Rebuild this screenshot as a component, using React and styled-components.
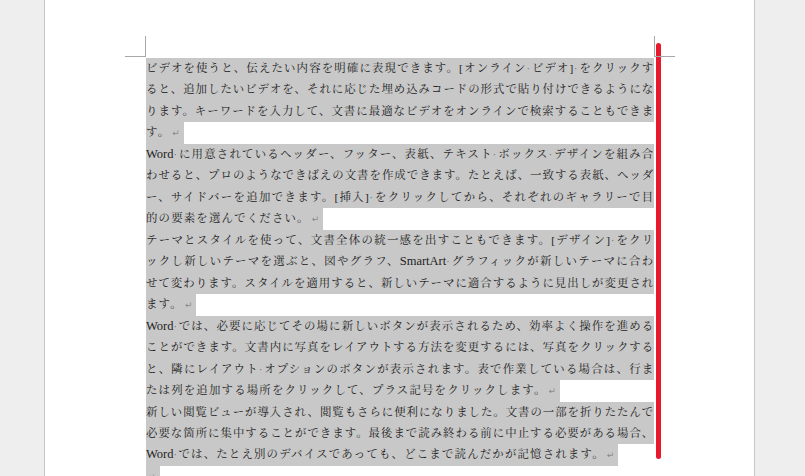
import React from 'react';
import styled, {createGlobalStyle} from 'styled-components';

const GlobalStyle = createGlobalStyle`
html, body {
    margin: 0;
    height: 100%;
    overflow: hidden;
    background: #eeeeee;
}
`;

const Page = styled.main`
    box-sizing: border-box;
    margin-left: 44px;
    width: 711px;
    min-height: 100vh;
    background: #ffffff;
    border-left: 1px solid #c6c6c6;
    border-right: 1px solid #c6c6c6;
    padding: 58px 0 0 101px;
`;

const TextArea = styled.div`
    position: relative;
    width: 508px;
    font-family: "Liberation Serif", "Noto Serif CJK JP", "Noto Sans CJK JP", serif;
    font-size: 11.4px;
    color: #222222;

    &::before, &::after {
        content: "";
        position: absolute;
        top: -22px;
        width: 20px;
        height: 20px;
        border-bottom: 1px solid #a8a8a8;
    }
    &::before {
        left: -21px;
        border-right: 1px solid #a8a8a8;
    }
    &::after {
        left: 508px;
        border-left: 1px solid #a8a8a8;
    }
`;

const RedMark = styled.div`
    position: absolute;
    left: 510px;
    top: -15px;
    width: 5px;
    height: 416px;
    border-radius: 3px;
    background: #e8192c;
`;

const Line = styled.div`
    height: 21.47px;
    line-height: 21.47px;
    background: #c8c8c8;
    letter-spacing: ${p => p.$end ? '1.2px' : '0.8px'};
    width: ${p => p.$end ? 'fit-content' : '100%'};
    padding-right: ${p => p.$end ? '4px' : '0'};
    text-align: ${p => p.$end ? 'left' : 'justify'};
    text-align-last: ${p => p.$end ? 'left' : 'justify'};
    white-space: nowrap;
`;

const Latin = styled.span`
    font-family: "Liberation Serif", serif;
    font-size: 12.5px;
    letter-spacing: 0;
`;

const SpaceMark = styled.span`
    display: inline-block;
    width: 5px;
    color: #666666;
    font-family: "Liberation Serif", serif;
    font-size: 10px;
    letter-spacing: 0;
`;

const ReturnMark = styled.span`
    margin-left: 2px;
    color: #8a8a8a;
    font-family: "DejaVu Sans", sans-serif;
    font-size: 9px;
    letter-spacing: 0;
`;

const paragraphs = [
    [
        'ビデオを使うと、伝えたい内容を明確に表現できます。[オンライン_ビデオ]_をクリックす',
        'ると、追加したいビデオを、それに応じた埋め込みコードの形式で貼り付けできるようにな',
        'ります。キーワードを入力して、文書に最適なビデオをオンラインで検索することもできま',
        'す。',
    ],
    [
        'Word_に用意されているヘッダー、フッター、表紙、テキスト_ボックス_デザインを組み合',
        'わせると、プロのようなできばえの文書を作成できます。たとえば、一致する表紙、ヘッダ',
        'ー、サイドバーを追加できます。[挿入]_をクリックしてから、それぞれのギャラリーで目',
        '的の要素を選んでください。',
    ],
    [
        'テーマとスタイルを使って、文書全体の統一感を出すこともできます。[デザイン]_をクリ',
        'ックし新しいテーマを選ぶと、図やグラフ、SmartArt_グラフィックが新しいテーマに合わ',
        'せて変わります。スタイルを適用すると、新しいテーマに適合するように見出しが変更され',
        'ます。',
    ],
    [
        'Word_では、必要に応じてその場に新しいボタンが表示されるため、効率よく操作を進める',
        'ことができます。文書内に写真をレイアウトする方法を変更するには、写真をクリックする',
        'と、隣にレイアウト_オプションのボタンが表示されます。表で作業している場合は、行ま',
        'たは列を追加する場所をクリックして、プラス記号をクリックします。',
    ],
    [
        '新しい閲覧ビューが導入され、閲覧もさらに便利になりました。文書の一部を折りたたんで',
        '必要な箇所に集中することができます。最後まで読み終わる前に中止する必要がある場合、',
        'Word_では、たとえ別のデバイスであっても、どこまで読んだかが記憶されます。',
    ],
    [
        '',
    ],
];

function renderText(text) {
    return text.split(/(Word|SmartArt|_)/).filter(Boolean).map((part, i) => {
        if (part === '_') return <SpaceMark key={i}>·</SpaceMark>;
        if (part === 'Word' || part === 'SmartArt') return <Latin key={i}>{part}</Latin>;
        return <React.Fragment key={i}>{part}</React.Fragment>;
    });
}

export default function App() {
    return (
        <>
            <GlobalStyle/>
            <Page>
                <TextArea>
                    {paragraphs.map((lines, p) =>
                        lines.map((text, l) => {
                            const end = l === lines.length - 1;
                            return (
                                <Line key={p + '-' + l} $end={end}>
                                    {renderText(text)}
                                    {end && <ReturnMark>↵</ReturnMark>}
                                </Line>
                            );
                        })
                    )}
                    <RedMark/>
                </TextArea>
            </Page>
        </>
    );
}
